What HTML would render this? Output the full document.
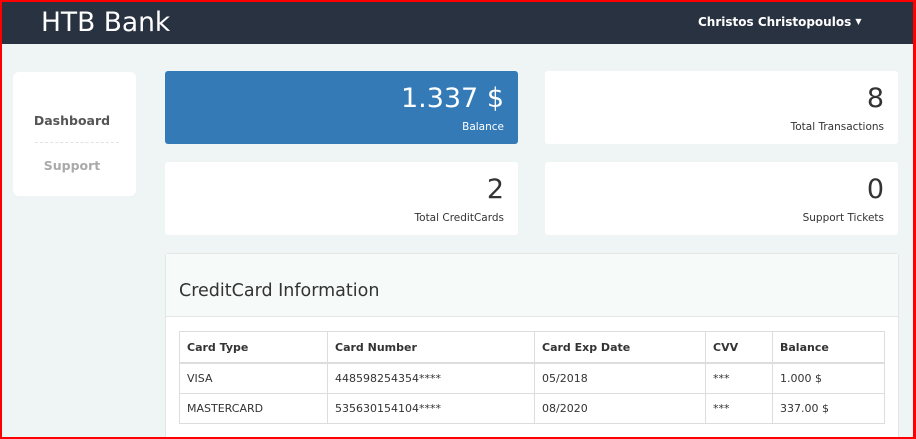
<!DOCTYPE html><html style="height:439px;overflow:hidden"><head><style>
body{margin:0;width:916px;height:439px;overflow:hidden;background:#eef5f4;font-family:"DejaVu Sans","Liberation Sans",sans-serif;position:relative}
.frame{position:absolute;left:0;top:0;width:911px;height:435px;border:2px solid #f00;border-right-width:3px;pointer-events:none;z-index:9}
.nav{position:absolute;left:0;top:0;width:916px;height:44px;background:#283240;color:#fff}
.brand{position:absolute;left:41px;top:7px;font-size:26.5px}
.user{position:absolute;left:698px;top:15px;font-size:12px;font-weight:bold}
.side{position:absolute;left:13px;top:72px;width:123px;height:124px;background:#fff;border-radius:6px}
.side .a{position:absolute;left:0;width:118px;text-align:center;font-size:12.5px;font-weight:bold}
.card{position:absolute;background:#fff;border-radius:3px;text-align:right;color:#333}
.card .n{position:absolute;right:14px;top:12px;font-size:27px}
.card .l{position:absolute;right:14px;top:50px;font-size:10.5px}
.panel{position:absolute;left:165px;top:253px;width:732px;height:200px;background:#fff;border:1px solid #e3e8e6;border-radius:3px}
.ph{height:63px;background:#f6faf8;border-bottom:1px solid #e3e6e5;font-size:17.5px;color:#333;padding:27px 0 0 13px;box-sizing:border-box}
table{position:absolute;left:13px;top:77px;width:706px;border-collapse:collapse;font-size:11px;color:#333}
td,th{border:1px solid #ddd;text-align:left;padding:0 7px;height:29px}
th{height:30px;border-bottom:2px solid #ddd}
</style></head><body>
<div class="nav"><div class="brand">HTB Bank</div><div class="user">Christos Christopoulos <span style="font-size:8px;vertical-align:2px">▼</span></div></div>
<div class="side"><div class="a" style="top:41px;color:#555">Dashboard</div><div style="position:absolute;left:22px;top:70px;width:84px;border-top:1px dashed #e2e2e2"></div><div class="a" style="top:86px;color:#aaa">Support</div></div>
<div class="card" style="left:165px;top:71px;width:353px;height:73px;background:#337ab7;color:#fff"><div class="n">1.337 $</div><div class="l">Balance</div></div>
<div class="card" style="left:545px;top:71px;width:353px;height:73px"><div class="n">8</div><div class="l">Total Transactions</div></div>
<div class="card" style="left:165px;top:162px;width:353px;height:73px"><div class="n">2</div><div class="l">Total CreditCards</div></div>
<div class="card" style="left:545px;top:162px;width:353px;height:73px"><div class="n">0</div><div class="l">Support Tickets</div></div>
<div class="panel"><div class="ph">CreditCard Information</div>
<table><tr><th style="width:133px">Card Type</th><th style="width:192px">Card Number</th><th style="width:156px">Card Exp Date</th><th style="width:52px">CVV</th><th>Balance</th></tr>
<tr><td>VISA</td><td>448598254354****</td><td>05/2018</td><td>***</td><td>1.000 $</td></tr>
<tr><td>MASTERCARD</td><td>535630154104****</td><td>08/2020</td><td>***</td><td>337.00 $</td></tr></table></div>
<div class="frame"></div>
</body></html>
